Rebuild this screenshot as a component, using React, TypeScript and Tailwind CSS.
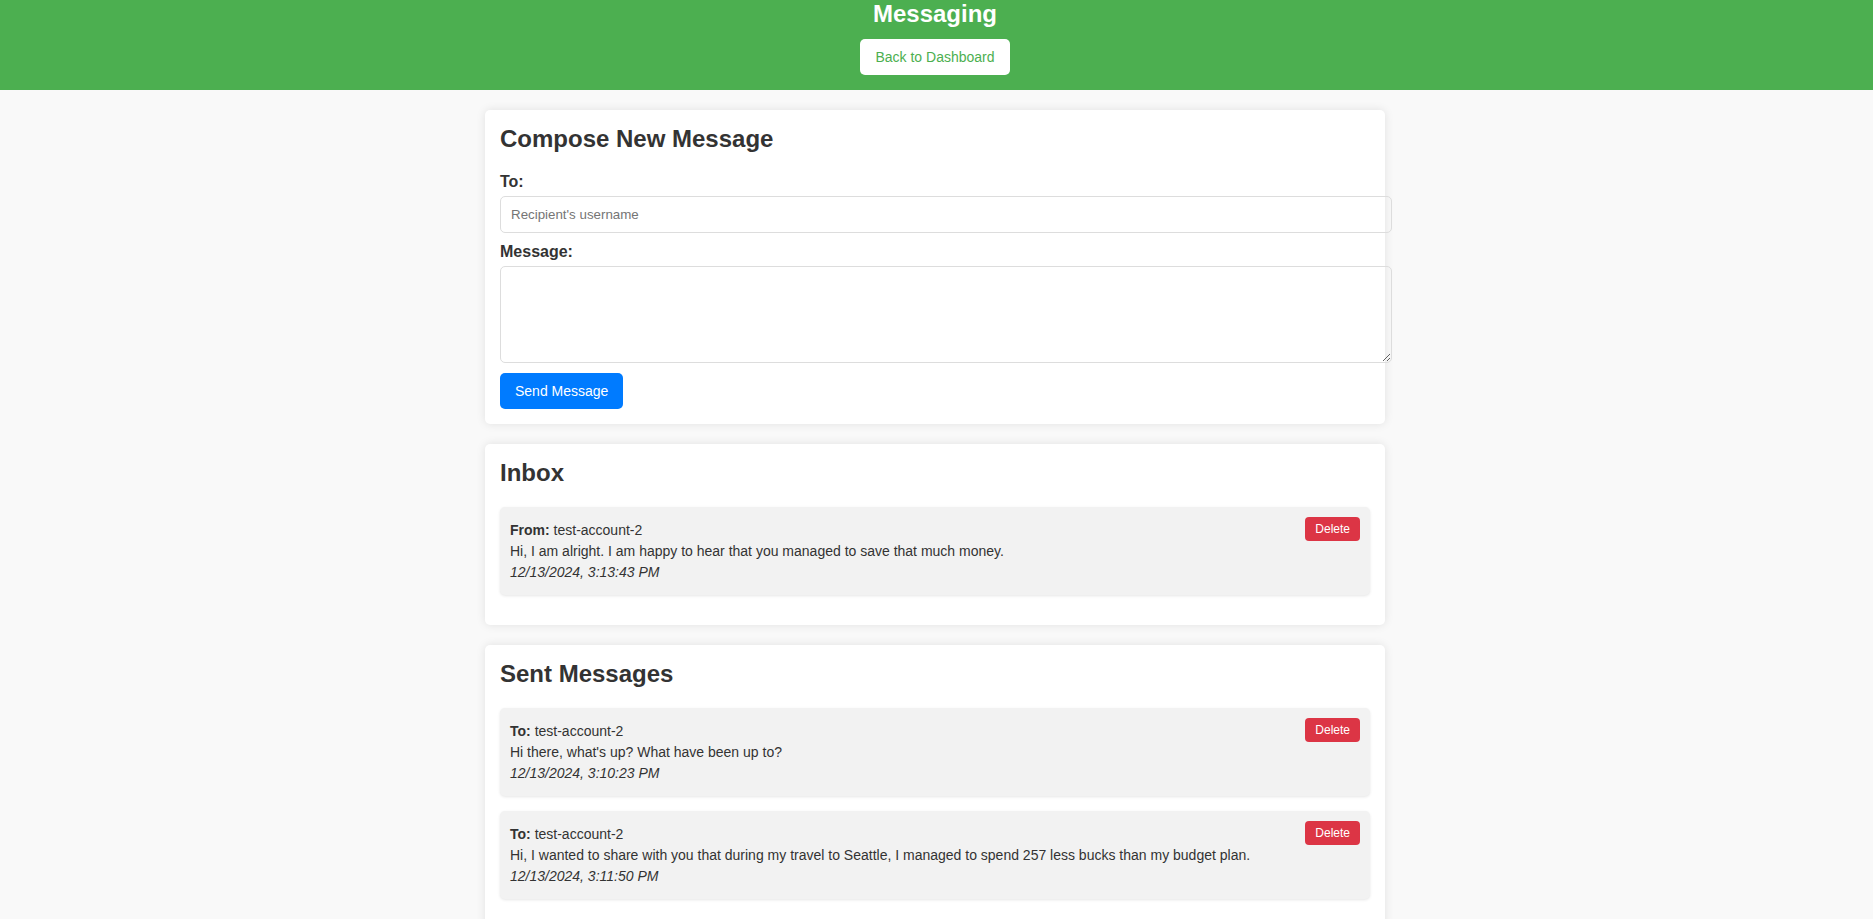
import React from 'react';

interface Msg {
    label: string;
    who: string;
    body: string;
    at: string;
}

const inbox: Msg[] = [
    {
        label: 'From:',
        who: 'test-account-2',
        body: 'Hi, I am alright. I am happy to hear that you managed to save that much money.',
        at: '12/13/2024, 3:13:43 PM'
    }
];

const sent: Msg[] = [
    {
        label: 'To:',
        who: 'test-account-2',
        body: "Hi there, what's up? What have been up to?",
        at: '12/13/2024, 3:10:23 PM'
    },
    {
        label: 'To:',
        who: 'test-account-2',
        body: 'Hi, I wanted to share with you that during my travel to Seattle, I managed to spend 257 less bucks than my budget plan.',
        at: '12/13/2024, 3:11:50 PM'
    }
];

function MessageItem({ msg }: { msg: Msg }) {
    return (
        <div className="flex items-start justify-between bg-[#f2f2f2] rounded-[5px] p-[10px] mb-[15px] shadow-[0_1px_3px_rgba(0,0,0,0.1)]">
            <div className="flex flex-col gap-[5px] py-[5px] text-[14px] leading-[16.1px]">
                <p>
                    <strong>{msg.label}</strong> {msg.who}
                </p>
                <p>{msg.body}</p>
                <p className="italic">{msg.at}</p>
            </div>
            <button className="bg-[#dc3545] text-white text-[12px] leading-[14px] px-[10px] py-[5px] rounded-[4px]">
                Delete
            </button>
        </div>
    );
}

function Card({ title, children }: { title: string; children: React.ReactNode }) {
    return (
        <section className="bg-white rounded-[5px] p-[15px] mb-[20px] shadow-[0_0_10px_rgba(0,0,0,0.1)]">
            <h2 className="text-[24px] font-bold leading-[27.6px] mb-[19.92px]">{title}</h2>
            {children}
        </section>
    );
}

export default function App() {
    return (
        <div className="min-h-screen bg-[#f9f9f9] text-[#333] font-['Liberation_Sans',Arial,sans-serif]">
            <header className="h-[90px] pr-[3px] bg-[#4caf50] flex flex-col items-center">
                <h1 className="text-white text-[24px] font-bold leading-[27.6px]">Messaging</h1>
                <button className="mt-[11.4px] bg-white text-[#4caf50] text-[14px] leading-[16px] px-[15px] py-[10px] rounded-[5px]">
                    Back to Dashboard
                </button>
            </header>

            <div className="pr-[3px]">
                <main className="w-[900px] mx-auto pt-[20px]">
                    <Card title="Compose New Message">
                        <label className="block text-[16px] font-bold leading-[18.4px] mb-[5px]">To:</label>
                        <input
                            type="text"
                            placeholder="Recipient's username"
                            className="block box-content w-full h-[15px] p-[10px] mb-[10px] border border-[#ddd] rounded-[5px] text-[13.33px] leading-[15px] placeholder:text-[#757575] outline-none"
                        />
                        <label className="block text-[16px] font-bold leading-[18.4px] mb-[5px]">Message:</label>
                        <textarea className="block box-content w-full h-[75px] p-[10px] border border-[#ddd] rounded-[5px] text-[13.33px] resize outline-none" />
                        <button className="mt-[10px] bg-[#007bff] text-white text-[14px] leading-[16px] px-[15px] py-[10px] rounded-[5px]">
                            Send Message
                        </button>
                    </Card>

                    <Card title="Inbox">
                        {inbox.map((m, i) => (
                            <MessageItem key={i} msg={m} />
                        ))}
                    </Card>

                    <Card title="Sent Messages">
                        {sent.map((m, i) => (
                            <MessageItem key={i} msg={m} />
                        ))}
                    </Card>
                </main>
            </div>
        </div>
    );
}
